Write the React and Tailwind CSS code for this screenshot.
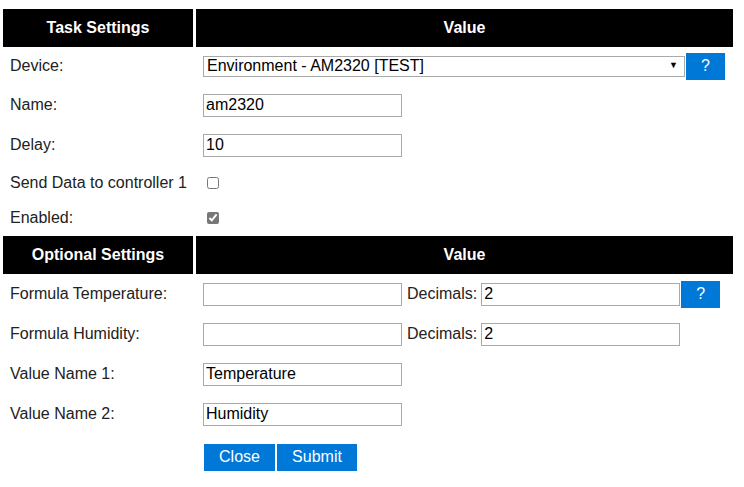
import React from 'react';

const FONT = { fontFamily: '"Liberation Sans", Arial, sans-serif' };

const Header = ({ left }) => (
    <div className="flex gap-[3px] h-[38px]">
        <div className="w-[190px] bg-black text-white font-bold text-[16px] flex items-center justify-center">{left}</div>
        <div className="flex-1 bg-black text-white font-bold text-[16px] flex items-center justify-center">Value</div>
    </div>
);

const Row = ({ label, h = 'h-[40px]', children }) => (
    <div className={`flex items-center ${h}`}>
        <div className="w-[200px] pl-[7px] text-[16px] text-[#222]">{label}</div>
        <div className="flex items-center">{children}</div>
    </div>
);

const TextBox = ({ value, w = 'w-[199px]' }) => (
    <input
        readOnly
        value={value}
        className={`${w} h-[23px] border border-[#a9a9a9] px-[2px] text-[16px] text-black outline-none`}
        style={FONT}
    />
);

const HelpButton = () => (
    <button className="w-[39px] h-[27px] bg-[#0078d7] text-white text-[16px] flex items-center justify-center">?</button>
);

const Check = ({ checked }) => (
    <input type="checkbox" readOnly checked={checked} className="ml-[4px] w-[12px] h-[12px] accent-[#777]" />
);

export default function App() {
    return (
        <div className="bg-white w-[744px] h-[487px] pt-[9px] pl-[3px] pr-[11px]" style={FONT}>
            <Header left="Task Settings" />

            {/* Task settings */}
            <Row label="Device:" h="h-[38px]">
                <div className="flex items-center gap-[1px]">
                    <div className="w-[482px] h-[21px] border border-[#a9a9a9] flex items-center justify-between pl-[3px] pr-[6px] text-[16px] text-black">
                        <span>Environment - AM2320 [TEST]</span>
                        <span className="text-[9px]">▼</span>
                    </div>
                    <HelpButton />
                </div>
            </Row>
            <Row label="Name:"><TextBox value="am2320" /></Row>
            <Row label="Delay:"><TextBox value="10" /></Row>
            <Row label="Send Data to controller 1" h="h-[36px]"><Check checked={false} /></Row>
            <Row label="Enabled:" h="h-[33px]"><Check checked /></Row>

            <div className="h-[2px]" />
            <Header left="Optional Settings" />

            {/* Optional settings */}
            <Row label="Formula Temperature:">
                <TextBox value="" />
                <span className="ml-[5px] mr-[4px] text-[16px] text-[#222]">Decimals:</span>
                <TextBox value="2" />
                <div className="ml-[1px]"><HelpButton /></div>
            </Row>
            <Row label="Formula Humidity:">
                <TextBox value="" />
                <span className="ml-[5px] mr-[4px] text-[16px] text-[#222]">Decimals:</span>
                <TextBox value="2" />
            </Row>
            <Row label="Value Name 1:"><TextBox value="Temperature" /></Row>
            <Row label="Value Name 2:"><TextBox value="Humidity" /></Row>

            <div className="flex items-center h-[46px] pl-[201px] gap-[2px]">
                <button className="w-[71px] h-[27px] bg-[#0078d7] text-white text-[16px]">Close</button>
                <button className="w-[80px] h-[27px] bg-[#0078d7] text-white text-[16px]">Submit</button>
            </div>
        </div>
    );
}
